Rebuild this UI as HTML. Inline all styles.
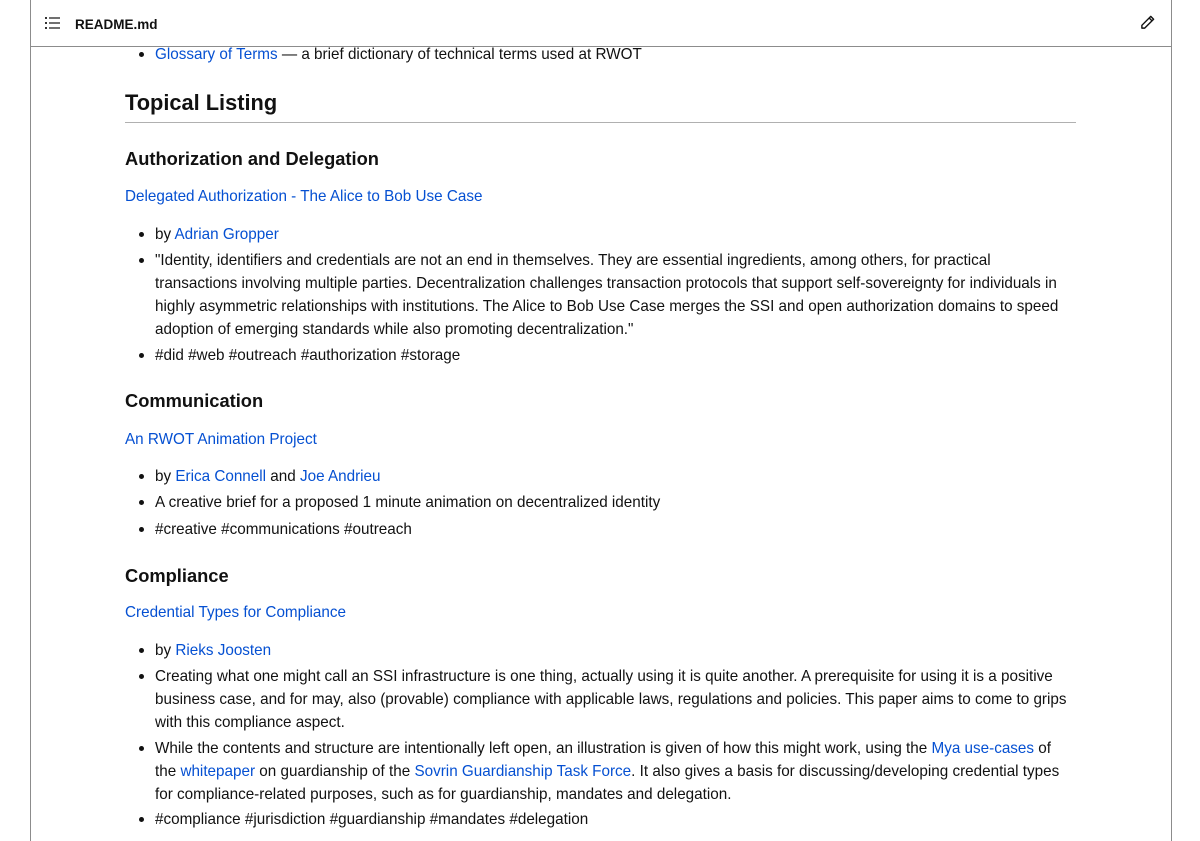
<!DOCTYPE html>
<html><head><meta charset="utf-8"><style>
html,body{margin:0;padding:0;background:#fff;}
body{width:1200px;height:841px;position:relative;overflow:hidden;font-family:"Liberation Sans",Arial,sans-serif;color:#111;font-size:15.25px;}
.vl{position:absolute;top:0;bottom:0;width:1px;background:#8c8c8c;}
.hd{position:absolute;left:30px;width:1142px;top:46px;height:1px;background:#8c8c8c;}
.t{position:absolute;white-space:nowrap;line-height:23px;margin-top:1px;}
a{color:#0550d2;text-decoration:none;}
.b{position:absolute;width:5px;height:5px;border-radius:50%;background:#111;margin-top:1px;}
.h2{font-size:21.8px;}
.h3{font-size:18.3px;}
</style></head><body>
<div class="vl" style="left:30px"></div>
<div class="vl" style="left:1171px"></div>
<div class="hd"></div>
<svg style="position:absolute;left:45px;top:16px" width="16" height="14" viewBox="0 0 16 14"><g fill="#333"><rect x="0" y="1" width="2" height="2"/><rect x="0" y="6" width="2" height="2"/><rect x="0" y="11" width="2" height="2"/><rect x="4" y="1.3" width="11" height="1.4"/><rect x="4" y="6.3" width="11" height="1.4"/><rect x="4" y="11.3" width="11" height="1.4"/></g></svg>
<div class="t" style="left:75px;top:12px;font-weight:bold;font-size:13.5px;">README.md</div>
<svg style="position:absolute;left:1140px;top:15px" width="15" height="15" viewBox="0 0 16 16"><path d="M11.5 1.5l3 3L5 14H2v-3z M9.8 3.2l3 3" fill="none" stroke="#111" stroke-width="1.5" stroke-linejoin="round"/></svg>

<div class="b" style="left:139px;top:51px"></div>
<div class="t" style="left:155px;top:42px"><a>Glossary of Terms</a> — a brief dictionary of technical terms used at RWOT</div>

<div class="t h2" style="left:125px;top:89px;font-weight:bold;line-height:26px">Topical Listing</div>
<div style="position:absolute;left:125px;width:951px;top:122px;height:1px;background:#b0b0b0"></div>

<div class="t h3" style="left:125px;top:146px;font-weight:bold">Authorization and Delegation</div>
<div class="t" style="left:125px;top:184px"><a>Delegated Authorization - The Alice to Bob Use Case</a></div>
<div class="b" style="left:139px;top:231px"></div>
<div class="t" style="left:155px;top:222px">by <a>Adrian Gropper</a></div>
<div class="b" style="left:139px;top:257px"></div>
<div class="t" style="left:155px;top:248px">"Identity, identifiers and credentials are not an end in themselves. They are essential ingredients, among others, for practical<br>transactions involving multiple parties. Decentralization challenges transaction protocols that support self-sovereignty for individuals in<br>highly asymmetric relationships with institutions. The Alice to Bob Use Case merges the SSI and open authorization domains to speed<br>adoption of emerging standards while also promoting decentralization."</div>
<div class="b" style="left:139px;top:352px"></div>
<div class="t" style="left:155px;top:343px">#did #web #outreach #authorization #storage</div>

<div class="t h3" style="left:125px;top:388px;font-weight:bold">Communication</div>
<div class="t" style="left:125px;top:427px"><a>An RWOT Animation Project</a></div>
<div class="b" style="left:139px;top:473px"></div>
<div class="t" style="left:155px;top:464px">by <a>Erica Connell</a> and <a>Joe Andrieu</a></div>
<div class="b" style="left:139px;top:499px"></div>
<div class="t" style="left:155px;top:490px">A creative brief for a proposed 1 minute animation on decentralized identity</div>
<div class="b" style="left:139px;top:526px"></div>
<div class="t" style="left:155px;top:517px">#creative #communications #outreach</div>

<div class="t h3" style="left:125px;top:563px;font-weight:bold">Compliance</div>
<div class="t" style="left:125px;top:600px"><a>Credential Types for Compliance</a></div>
<div class="b" style="left:139px;top:647px"></div>
<div class="t" style="left:155px;top:638px">by <a>Rieks Joosten</a></div>
<div class="b" style="left:139px;top:673px"></div>
<div class="t" style="left:155px;top:664px">Creating what one might call an SSI infrastructure is one thing, actually using it is quite another. A prerequisite for using it is a positive<br>business case, and for may, also (provable) compliance with applicable laws, regulations and policies. This paper aims to come to grips<br>with this compliance aspect.</div>
<div class="b" style="left:139px;top:745px"></div>
<div class="t" style="left:155px;top:736px">While the contents and structure are intentionally left open, an illustration is given of how this might work, using the <a>Mya use-cases</a> of<br>the <a>whitepaper</a> on guardianship of the <a>Sovrin Guardianship Task Force</a>. It also gives a basis for discussing/developing credential types<br>for compliance-related purposes, such as for guardianship, mandates and delegation.</div>
<div class="b" style="left:139px;top:816px"></div>
<div class="t" style="left:155px;top:807px">#compliance #jurisdiction #guardianship #mandates #delegation</div>
</body></html>
